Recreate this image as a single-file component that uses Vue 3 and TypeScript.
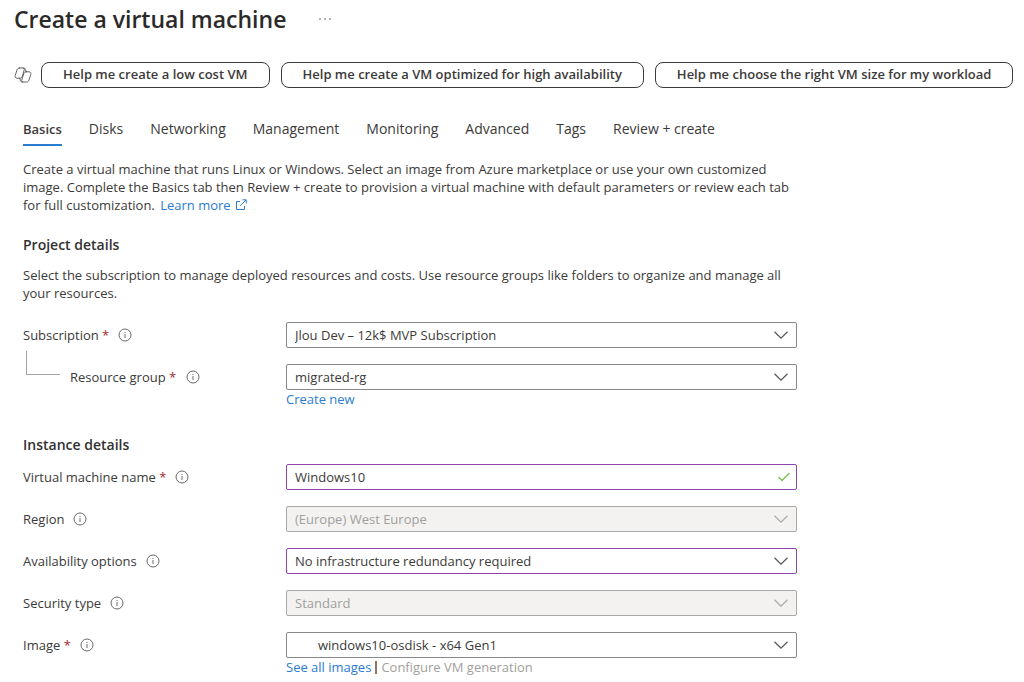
<script setup lang="ts">
import { ref } from 'vue'

const suggestions: string[] = [
  'Help me create a low cost VM',
  'Help me create a VM optimized for high availability',
  'Help me choose the right VM size for my workload',
]

const tabs: string[] = [
  'Basics',
  'Disks',
  'Networking',
  'Management',
  'Monitoring',
  'Advanced',
  'Tags',
  'Review + create',
]
const activeTab = ref<string>('Basics')

interface Field {
  id: string
  label: string
  value: string
  required?: boolean
  nested?: boolean
  disabled?: boolean
  edited?: boolean
  text?: boolean
  indent?: boolean
  links?: 'create' | 'images'
}

interface Section {
  title: string
  description?: string
  fields: Field[]
}

const sections = ref<Section[]>([
  {
    title: 'Project details',
    description:
      'Select the subscription to manage deployed resources and costs. Use resource groups like folders to organize and manage all your resources.',
    fields: [
      { id: 'subscription', label: 'Subscription', value: 'Jlou Dev – 12k$ MVP Subscription', required: true },
      { id: 'resource-group', label: 'Resource group', value: 'migrated-rg', required: true, nested: true, links: 'create' },
    ],
  },
  {
    title: 'Instance details',
    fields: [
      { id: 'vm-name', label: 'Virtual machine name', value: 'Windows10', required: true, edited: true, text: true },
      { id: 'region', label: 'Region', value: '(Europe) West Europe', disabled: true },
      { id: 'availability', label: 'Availability options', value: 'No infrastructure redundancy required', edited: true },
      { id: 'security', label: 'Security type', value: 'Standard', disabled: true },
      { id: 'image', label: 'Image', value: 'windows10-osdisk - x64 Gen1', required: true, indent: true, links: 'images' },
    ],
  },
])
</script>

<template>
  <main class="page">
    <header class="title-bar">
      <h1>Create a virtual machine</h1>
      <button type="button" class="more" aria-label="More actions">
        <svg width="14" height="4" viewBox="0 0 14 4"><g fill="#555"><circle cx="2" cy="2" r="0.8" /><circle cx="7" cy="2" r="0.8" /><circle cx="12" cy="2" r="0.8" /></g></svg>
      </button>
    </header>

    <div class="suggestions">
      <svg class="copilot" width="18" height="16" viewBox="0 0 18 16" fill="none" stroke="#555" stroke-width="0.900" stroke-linejoin="round" stroke-linecap="round">
        <path d="M5.600 1H9.200C10.600 1 10.500 2 10.200 3L8.200 9.500C7.800 10.700 7.300 11.200 6 11.200H3C1.300 11.200.8 9.900 1.300 8.300L3 3C3.500 1.600 4.200 1 5.600 1Z" />
        <path d="M12 4.800H15C16.700 4.800 17.200 6.100 16.700 7.700L15 13C14.500 14.400 13.800 15 12.400 15H8.800C7.400 15 7.500 14 7.800 13L9.800 6.500C10.200 5.300 10.700 4.800 12 4.800Z" />
        <path d="M9.200 1C11 1 11.300 1.600 11.600 2.600L12.300 4.800M8.800 15C7 15 6.700 14.400 6.400 13.400L5.700 11.200" />
      </svg>
      <button v-for="s in suggestions" :key="s" type="button" class="pill">{{ s }}</button>
    </div>

    <nav class="tabs" role="tablist">
      <button
        v-for="t in tabs"
        :key="t"
        type="button"
        role="tab"
        class="tab"
        :class="{ active: t === activeTab }"
        :aria-selected="t === activeTab"
        @click="activeTab = t"
      >{{ t }}</button>
    </nav>

    <div class="content">
      <p class="intro">
        Create a virtual machine that runs Linux or Windows. Select an image from Azure marketplace or use your own customized image. Complete the Basics tab then Review + create to provision a virtual machine with default parameters or review each tab for full customization.
        <a href="#" class="learn">Learn more<svg width="12" height="12" viewBox="0 0 12 12" fill="none" stroke="currentColor"><path d="M5 2.500H1.500V10.500H9.500V7M7.500.8H11.200V4.500M11 1 5.200 6.800" /></svg></a>
      </p>

      <section v-for="section in sections" :key="section.title">
        <h2>{{ section.title }}</h2>
        <p v-if="section.description">{{ section.description }}</p>
        <div class="fields">
          <div v-for="f in section.fields" :key="f.id" class="field">
            <div class="caption" :class="{ nested: f.nested }">
              <span v-if="f.nested" class="branch"></span>
              <label :for="f.id">{{ f.label }}<span v-if="f.required" class="star"> *</span></label>
              <svg class="info" width="14" height="14" viewBox="0 0 14 14" fill="none" stroke="#6a6a6a">
                <circle cx="7" cy="7" r="6" />
                <path d="M7 6V10M7 4V5" />
              </svg>
            </div>
            <div>
              <div class="control">
                <input v-if="f.text" :id="f.id" v-model="f.value" type="text" class="box" :class="{ edited: f.edited }" />
                <select v-else :id="f.id" v-model="f.value" class="box" :class="{ edited: f.edited, indent: f.indent }" :disabled="f.disabled">
                  <option :value="f.value">{{ f.value }}</option>
                </select>
                <svg v-if="f.text" class="mark check" width="12" height="10" viewBox="0 0 12 10" fill="none" stroke="#7cbb50" stroke-width="1.300"><path d="M.5 5 4 8.500 11.500 1" /></svg>
                <svg v-else class="mark" :class="{ dim: f.disabled }" width="14" height="8" viewBox="0 0 14 8" fill="none" stroke="#555" stroke-width="1.200"><path d="M.5.8 7 7.200 13.500.8" /></svg>
              </div>
              <div v-if="f.links === 'create'" class="links"><a href="#">Create new</a></div>
              <div v-if="f.links === 'images'" class="links"><a href="#">See all images</a><span class="bar"></span><span class="off">Configure VM generation</span></div>
            </div>
          </div>
        </div>
      </section>
    </div>
  </main>
</template>

<style>
body {
  margin: 0;
  background: #fff;
}
</style>

<style scoped>
.page {
  font-family: "Open Sans", "Noto Sans", sans-serif;
  font-size: 13px;
  line-height: 18px;
  color: #3b3a39;
  padding-bottom: 4px;
}
button,
input,
select {
  font: inherit;
  color: inherit;
  box-sizing: border-box;
  margin: 0;
}
a {
  color: #2b7cd0;
  text-decoration: none;
}
h1,
h2,
p {
  margin: 0;
}
.title-bar {
  display: flex;
  align-items: center;
  gap: 32px;
  padding: 3px 14px 0;
}
h1 {
  font-size: 23px;
  line-height: 32px;
  font-weight: 600;
  color: #2b2a29;
}
.more {
  display: flex;
  padding: 0;
  border: 0;
  background: none;
}
.suggestions {
  display: flex;
  align-items: center;
  gap: 11px;
  padding: 27px 10px 0 14px;
}
.copilot {
  flex: none;
  margin-right: -2px;
}
.pill {
  height: 26px;
  padding: 0 21px 2px;
  border: 1px solid #3b3a39;
  border-radius: 8px;
  background: #fff;
  font-weight: 600;
  line-height: 18px;
  white-space: nowrap;
}
.tabs {
  display: flex;
  gap: 27px;
  padding: 31px 23px 0;
}
.tab {
  padding: 0 0 5px;
  border: 0;
  border-bottom: 2px solid transparent;
  background: none;
  font-size: 14px;
  line-height: 20px;
  white-space: nowrap;
}
.tab.active {
  font-size: 13px;
  font-weight: 600;
  border-bottom-color: #2b7cd0;
}
.content {
  max-width: 775px;
  padding: 14px 23px 0;
}
.learn {
  margin-left: 2px;
}
.learn svg {
  margin-left: 4px;
  vertical-align: -1px;
}
h2 {
  padding-top: 22px;
  font-size: 14px;
  line-height: 18px;
  font-weight: 600;
  color: #323130;
}
section p {
  margin-top: 12px;
  margin-bottom: 20px;
}
.fields {
  display: grid;
  gap: 16px;
  margin-top: 10px;
}
section + section h2 {
  padding-top: 28px;
}
.field {
  display: grid;
  grid-template-columns: 263px minmax(0, 511px);
}
.caption {
  display: flex;
  align-items: center;
  height: 26px;
}
.nested {
  gap: 10px;
  padding-left: 3px;
}
.branch {
  width: 34px;
  height: 24px;
  margin-bottom: 28px;
  box-sizing: border-box;
  border-left: 1px solid #a5a5a5;
  border-bottom: 1px solid #a5a5a5;
}
.star {
  color: #a4262c;
}
.info {
  margin-left: 9px;
}
.nested .info {
  margin-left: 0;
}
.control {
  display: grid;
  align-items: center;
}
.control > * {
  grid-area: 1 / 1;
}
.box {
  width: 100%;
  height: 26px;
  padding: 0 32px 0 8px;
  border: 1px solid #8a8886;
  border-radius: 2px;
  background: #fff;
  appearance: none;
  outline: none;
}
.box:disabled {
  background: #f3f2f1;
  color: #a19f9d;
  border-color: #a9a9a9;
  opacity: 1;
}
.edited {
  border-color: #8e44ad;
}
.indent {
  padding-left: 31px;
}
.mark {
  justify-self: end;
  margin-right: 9px;
  pointer-events: none;
}
.check {
  margin-right: 7px;
}
.dim {
  opacity: 0.45;
}
.links {
  display: flex;
  align-items: center;
}
.bar {
  width: 2px;
  height: 13px;
  margin: 0 4px;
  background: #8c7862;
}
.off {
  color: #a19f9d;
}
</style>
